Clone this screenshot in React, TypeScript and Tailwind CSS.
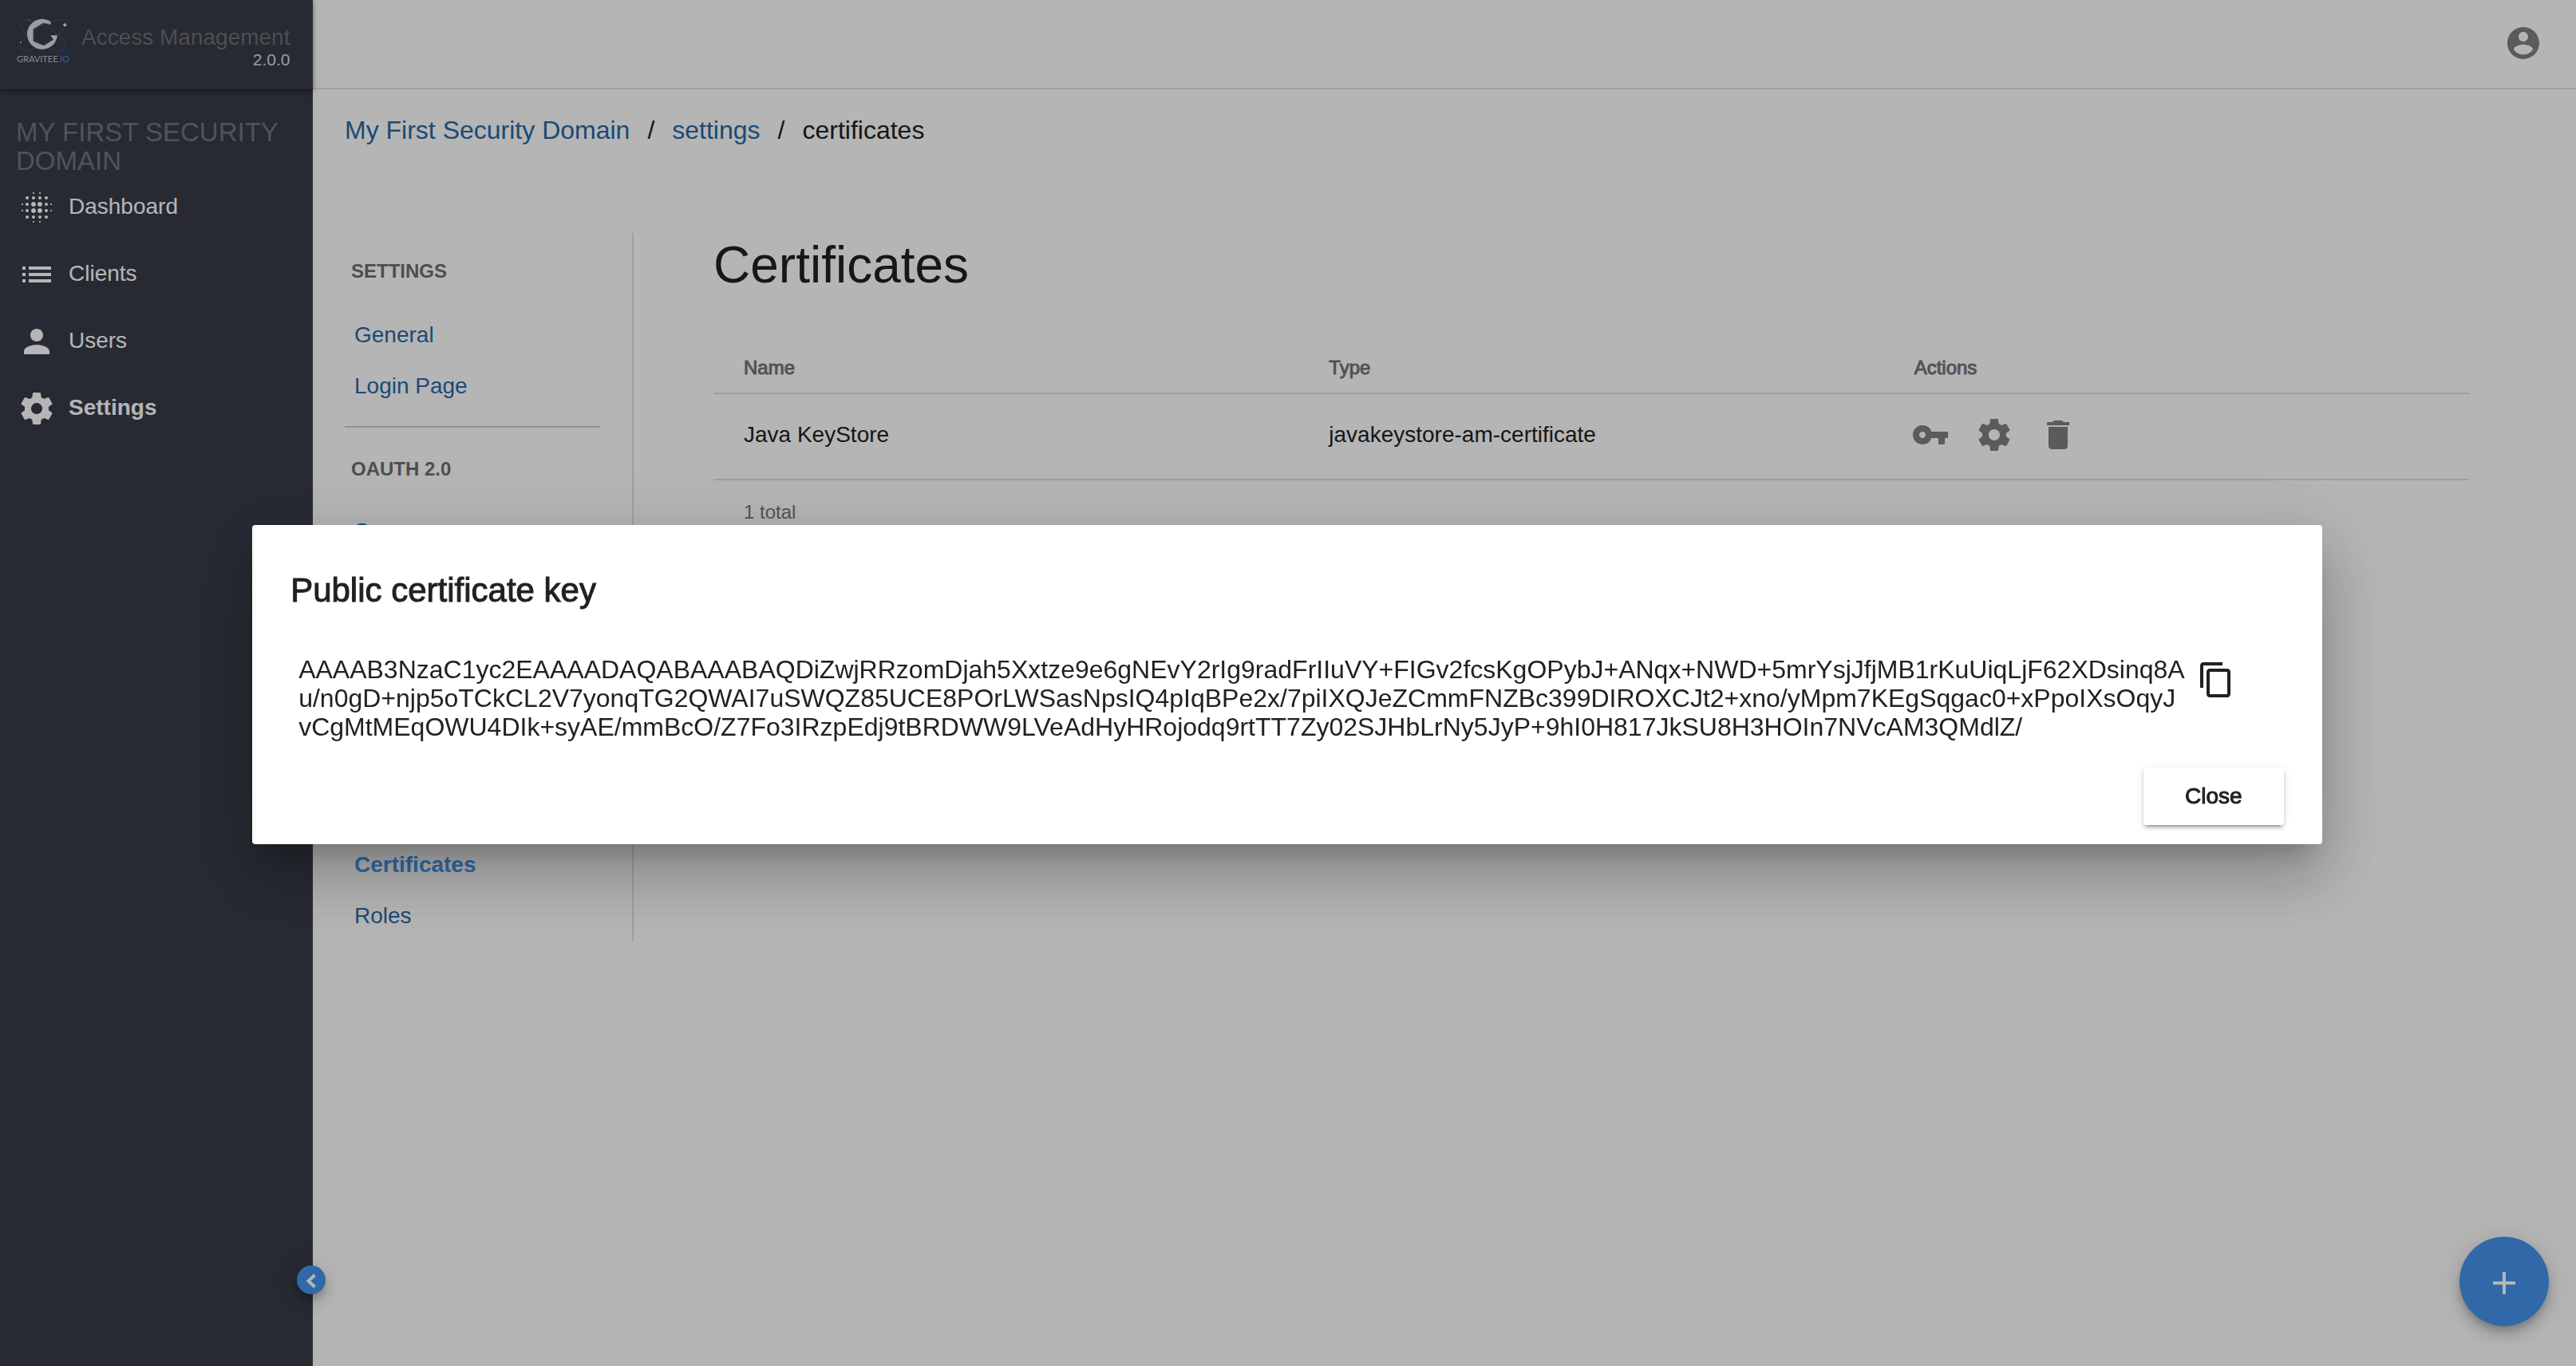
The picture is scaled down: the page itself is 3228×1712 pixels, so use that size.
import React from "react";
import { MdAdd, MdBlurOn, MdContentCopy, MdDelete, MdList, MdPerson, MdVpnKey } from "react-icons/md";

const GEAR =
  "M19.43 12.98c.04-.32.07-.64.07-.98s-.03-.66-.07-.98l2.11-1.65c.19-.15.24-.42.12-.64l-2-3.46c-.12-.22-.39-.3-.61-.22l-2.49 1c-.52-.4-1.08-.73-1.69-.98l-.38-2.65C14.46 2.18 14.25 2 14 2h-4c-.25 0-.46.18-.49.42l-.38 2.65c-.61.25-1.17.59-1.69.98l-2.49-1c-.23-.09-.49 0-.61.22l-2 3.46c-.13.22-.07.49.12.64l2.11 1.65c-.04.32-.07.65-.07.98s.03.66.07.98l-2.11 1.65c-.19.15-.24.42-.12.64l2 3.46c.12.22.39.3.61.22l2.49-1c.52.4 1.08.73 1.69.98l.38 2.65c.03.24.24.42.49.42h4c.25 0 .46-.18.49-.42l.38-2.65c.61-.25 1.17-.59 1.69-.98l2.49 1c.23.09.49 0 .61-.22l2-3.46c.12-.22.07-.49-.12-.64l-2.11-1.65zM12 15.5c-1.93 0-3.5-1.57-3.5-3.5s1.57-3.5 3.5-3.5 3.5 1.57 3.5 3.5-1.57 3.5-3.5 3.5z";

const ACCOUNT =
  "M12 2C6.48 2 2 6.48 2 12s4.48 10 10 10 10-4.48 10-10S17.52 2 12 2zm0 3c1.66 0 3 1.34 3 3s-1.34 3-3 3-3-1.34-3-3 1.34-3 3-3zm0 14.2c-2.5 0-4.71-1.28-6-3.22.03-1.99 4-3.08 6-3.08 1.99 0 5.97 1.09 6 3.08-1.29 1.94-3.5 3.22-6 3.22z";

function PathIcon({ d }: { d: string }) {
  return (
    <svg viewBox="0 0 24 24" className="size-12 shrink-0" fill="currentColor" aria-hidden="true">
      <path d={d} />
    </svg>
  );
}

function Logo() {
  return (
    <div className="flex w-16 flex-col items-center">
      <svg viewBox="0 0 64 44" className="h-11 w-16" aria-hidden="true">
        <g fill="none" stroke="#35566e" strokeWidth="1">
          <ellipse cx="31.5" cy="22" rx="32" ry="11.6" transform="rotate(30 31.5 22)" />
          <ellipse cx="31.5" cy="22" rx="32" ry="11.6" transform="rotate(-30 31.5 22)" />
        </g>
        <path
          d="M41.7 5.2A19 19 0 1 0 49.9 22.3L41.3 22.3L45 27.7L33 35.3L19.7 29.7V14.3L32.3 6.7L41.7 8.7Z"
          fill="#dedede"
        />
        <path d="M41.7 8.7L32.3 6.7L19.7 14.3V29.7L33 35.3" fill="none" stroke="#6d9cc0" strokeWidth="1" />
        <circle cx="59.3" cy="9.3" r="2" fill="#e8e8e8" />
        <circle cx="4" cy="31" r="1" fill="#c8c8c8" />
        <circle cx="14.3" cy="3.3" r="1" fill="#8a8f98" />
      </svg>
      <span className="font-['Lato',sans-serif] text-[11px] leading-4 text-[#c0c0c0]">
        GRAVITEE<span className="text-[#3a93cf]">.IO</span>
      </span>
    </div>
  );
}

const navItems = [
  { label: "Dashboard", icon: <MdBlurOn className="size-12 shrink-0" />, active: false },
  { label: "Clients", icon: <MdList className="size-12 shrink-0" />, active: false },
  { label: "Users", icon: <MdPerson className="size-12 shrink-0" />, active: false },
  { label: "Settings", icon: <PathIcon d={GEAR} />, active: true },
];

function Sidebar() {
  return (
    <aside className="relative w-[392px] shrink-0 bg-[#383c48]">
      <div className="relative flex h-28 items-start pl-[22px] shadow-[0_2px_6px_rgba(0,0,0,0.5)]">
        <div className="pt-[22px]">
          <Logo />
        </div>
        <div className="flex flex-col pt-[31px] pl-4">
          <span className="text-[28px] leading-8 whitespace-nowrap text-[#6f6f70]">Access Management</span>
          <span className="text-right text-[21px] leading-6 text-[#dcdcdc]">2.0.0</span>
        </div>
      </div>
      <h2 className="pt-9 pl-5 text-[33px] leading-9 text-[#6d7780]">
        MY FIRST SECURITY
        <br />
        DOMAIN
      </h2>
      <nav className="flex flex-col gap-1">
        {navItems.map((item) => (
          <a
            key={item.label}
            href="#"
            className={`flex h-20 items-center gap-4 pl-[22px] text-[28px] text-white ${item.active ? "font-bold" : ""}`}
          >
            {item.icon}
            <span className="pb-[2px]">{item.label}</span>
          </a>
        ))}
      </nav>
      <button
        type="button"
        aria-label="Collapse menu"
        className="absolute -right-4 bottom-[90px] flex size-9 items-center justify-center rounded-full bg-[#4695ed] text-white shadow-[0_6px_10px_-2px_rgba(0,0,0,0.2),0_12px_20px_rgba(0,0,0,0.14),0_2px_36px_rgba(0,0,0,0.12)]"
      >
        <svg viewBox="0 0 36 36" className="size-9" fill="none" stroke="currentColor" strokeWidth="4" aria-hidden="true">
          <path d="M22.5 12L14.5 19.5L22.5 27" />
        </svg>
      </button>
    </aside>
  );
}

function SettingsMenu() {
  const heading = "pl-2 text-2xl leading-8 font-bold text-[#6f6f6f]";
  const link = "flex h-16 items-center pl-3 text-[28px]";
  return (
    <nav className="flex min-h-[888px] w-[362px] shrink-0 flex-col border-r-2 border-[#e0e0e0] pt-8 pr-10">
      <h3 className={heading}>SETTINGS</h3>
      <div className="pt-8 text-[#2769a5]">
        <a href="#" className={link}>General</a>
        <a href="#" className={link}>Login Page</a>
      </div>
      <hr className="mt-[18px] mb-9 border-t-2 border-[#cccccc]" />
      <h3 className={heading}>OAUTH 2.0</h3>
      <div className="pt-[30px] text-[#2769a5]">
        <a href="#" className={link}>Scopes</a>
      </div>
      <div className="mt-auto">
        <a href="#" className={`${link} font-bold text-[#4695ed]`}>Certificates</a>
        <a href="#" className={`${link} text-[#2769a5]`}>Roles</a>
      </div>
    </nav>
  );
}

function CertificatesTable() {
  const th =
    "h-16 w-1/3 border-b-2 border-[#e0e0e0] pl-[38px] text-left text-2xl font-normal text-[#757575] [-webkit-text-stroke:1px]";
  const td = "h-[108px] border-b-2 border-[#e0e0e0] pl-[38px] pb-1 text-[28px]";
  const action = "flex h-16 w-20 items-center justify-center";
  return (
    <section className="min-w-0 flex-1 pr-[134px] pl-[100px]">
      <h1 className="text-[64px] leading-[80px]">Certificates</h1>
      <table className="mt-[58px] w-full table-fixed border-separate border-spacing-0">
        <thead>
          <tr>
            <th className={th}>Name</th>
            <th className={th}>Type</th>
            <th className={th}>Actions</th>
          </tr>
        </thead>
        <tbody>
          <tr>
            <td className={td}>Java KeyStore</td>
            <td className={td}>javakeystore-am-certificate</td>
            <td className={td}>
              <div className="-ml-5 flex text-[#808080]">
                <button type="button" aria-label="Show public key" className={action}>
                  <MdVpnKey className="size-12" />
                </button>
                <button type="button" aria-label="Edit certificate" className={action}>
                  <PathIcon d={GEAR} />
                </button>
                <button type="button" aria-label="Delete certificate" className={action}>
                  <MdDelete className="size-12" />
                </button>
              </div>
            </td>
          </tr>
        </tbody>
      </table>
      <p className="pt-[22px] pl-[38px] text-2xl leading-9 text-[#757575]">1 total</p>
    </section>
  );
}

const publicKey = [
  "AAAAB3NzaC1yc2EAAAADAQABAAABAQDiZwjRRzomDjah5Xxtze9e6gNEvY2rIg9radFrIIuVY+FIGv2fcsKgOPybJ+ANqx+NWD+5mrYsjJfjMB1rKuUiqLjF62XDsinq8A",
  "u/n0gD+njp5oTCkCL2V7yonqTG2QWAI7uSWQZ85UCE8POrLWSasNpsIQ4pIqBPe2x/7piIXQJeZCmmFNZBc399DIROXCJt2+xno/yMpm7KEgSqgac0+xPpoIXsOqyJ",
  "vCgMtMEqOWU4DIk+syAE/mmBcO/Z7Fo3IRzpEdj9tBRDWW9LVeAdHyHRojodq9rtTT7Zy02SJHbLrNy5JyP+9hI0H817JkSU8H3HOIn7NVcAM3QMdlZ/",
];

function KeyDialog() {
  return (
    <div className="fixed inset-0 flex items-center justify-center bg-black/29 pt-1 pr-[2px]">
      <div
        role="dialog"
        aria-modal="true"
        aria-labelledby="key-title"
        className="w-[80.4%] rounded-[4px] bg-white px-12 pt-[58px] pb-6 shadow-[0_22px_30px_-14px_rgba(0,0,0,0.2),0_48px_76px_6px_rgba(0,0,0,0.14),0_18px_92px_16px_rgba(0,0,0,0.12)]"
      >
        <h2 id="key-title" className="text-[42px] leading-[48px] [-webkit-text-stroke:1px]">
          Public certificate key
        </h2>
        <div className="mt-[57px] flex items-start justify-between pl-[10px]">
          <p className="text-[32px] leading-9 whitespace-nowrap">
            {publicKey.map((line) => (
              <span key={line} className="block">{line}</span>
            ))}
          </p>
          <button type="button" aria-label="Copy key" className="mt-[7px] mr-[61px] shrink-0">
            <MdContentCopy className="size-12" />
          </button>
        </div>
        <div className="mt-[33px] flex justify-end">
          <button
            type="button"
            className="h-[72px] w-44 rounded-[4px] bg-white text-[28px] shadow-[0_6px_2px_-4px_rgba(0,0,0,0.2),0_4px_4px_rgba(0,0,0,0.14),0_2px_10px_rgba(0,0,0,0.12)] [-webkit-text-stroke:1px]"
          >
            Close
          </button>
        </div>
      </div>
    </div>
  );
}

export default function App() {
  return (
    <div className="flex min-h-screen bg-white font-['Liberation_Sans',Arial,sans-serif] text-[#212121]">
      <Sidebar />
      <div className="flex min-w-0 flex-1 flex-col">
        <header className="flex h-28 items-center justify-end border-b-2 border-[#e0e0e0] pr-[42px] pb-[2px] text-[#808080]">
          <button type="button" aria-label="Account">
            <PathIcon d={ACCOUNT} />
          </button>
        </header>
        <main className="pt-8 pl-10">
          <nav aria-label="Breadcrumb" className="flex gap-[22px] text-[32px] leading-[38px]">
            <a href="#" className="text-[#2769a5]">My First Security Domain</a>
            <span>/</span>
            <a href="#" className="text-[#2769a5]">settings</a>
            <span>/</span>
            <span>certificates</span>
          </nav>
          <div className="mt-[110px] flex items-start">
            <SettingsMenu />
            <CertificatesTable />
          </div>
        </main>
      </div>
      <button
        type="button"
        aria-label="Add certificate"
        className="fixed right-[34px] bottom-[50px] flex size-28 items-center justify-center rounded-full bg-[#4695ed] pt-1 text-white shadow-[0_6px_10px_-2px_rgba(0,0,0,0.2),0_12px_20px_rgba(0,0,0,0.14),0_2px_36px_rgba(0,0,0,0.12)]"
      >
        <MdAdd className="size-12" />
      </button>
      <KeyDialog />
    </div>
  );
}
